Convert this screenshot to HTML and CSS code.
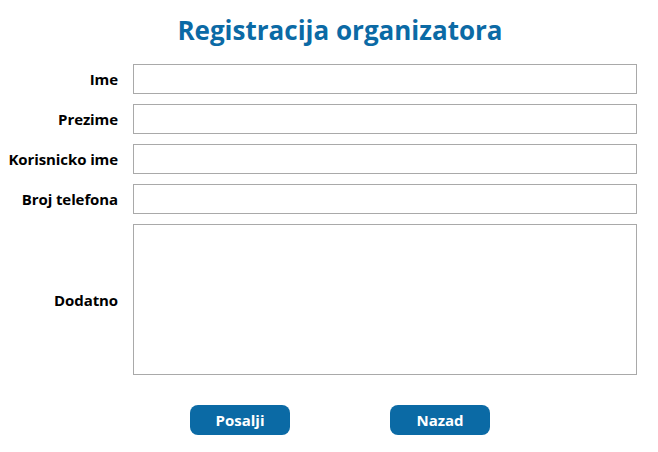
FILE: index.html
```html
<!DOCTYPE html>
<html>
<head>
<meta charset="utf-8">
<link rel="stylesheet" href="styles.css">
</head>
<body>
<div class="page">
  <h1 class="title">Registracija organizatora</h1>
  <form class="form">
    <div class="row">
      <label class="label">Ime</label>
      <input class="field" type="text">
    </div>
    <div class="row">
      <label class="label">Prezime</label>
      <input class="field" type="text">
    </div>
    <div class="row">
      <label class="label">Korisnicko ime</label>
      <input class="field" type="text">
    </div>
    <div class="row">
      <label class="label">Broj telefona</label>
      <input class="field" type="text">
    </div>
    <div class="row">
      <label class="label">Dodatno</label>
      <textarea class="field area"></textarea>
    </div>
    <div class="buttons">
      <button type="button" class="btn">Posalji</button>
      <button type="button" class="btn">Nazad</button>
    </div>
  </form>
</div>
</body>
</html>
```

FILE: styles.css
```css
html, body {
  margin: 0;
  padding: 0;
  background: #ffffff;
}
body {
  font-family: "Open Sans", "Noto Sans", "Liberation Sans", sans-serif;
  color: #000;
}
.page {
  width: 658px;
  padding-top: 14px;
}
.title {
  margin: 0 0 18px 0;
  padding-left: 22px;
  text-align: center;
  font-size: 26px;
  line-height: 32px;
  font-weight: 700;
  color: #0b6aa5;
  letter-spacing: 0;
}
.form {
  display: flex;
  flex-direction: column;
  gap: 10px;
  margin: 0;
}
.row {
  display: flex;
  align-items: center;
  gap: 15px;
}
.label {
  width: 118px;
  text-align: right;
  font-size: 15px;
  font-weight: 700;
  letter-spacing: -0.1px;
  white-space: nowrap;
}
.field {
  box-sizing: border-box;
  width: 504px;
  height: 30px;
  margin: 0;
  border: 1px solid #a9a9a9;
  border-radius: 0;
  background: #fff;
  padding: 2px 4px;
  font: inherit;
}
.area {
  height: 151px;
  resize: none;
  display: block;
}
.buttons {
  display: flex;
  gap: 100px;
  padding-left: 190px;
  margin-top: 20px;
}
.btn {
  box-sizing: border-box;
  width: 100px;
  height: 30px;
  border: none;
  border-radius: 8px;
  background: #0b6aa5;
  color: #fff;
  font-family: "Open Sans", "Noto Sans", "Liberation Sans", sans-serif;
  font-size: 15px;
  font-weight: 700;
  padding: 0;
}
```
